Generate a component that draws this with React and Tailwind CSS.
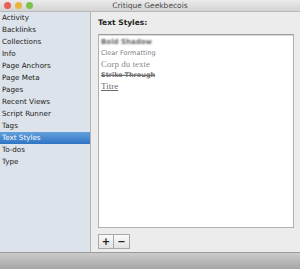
import React from 'react';

const items = [
  'Activity',
  'Backlinks',
  'Collections',
  'Info',
  'Page Anchors',
  'Page Meta',
  'Pages',
  'Recent Views',
  'Script Runner',
  'Tags',
  'Text Styles',
  'To-dos',
  'Type',
];

const App = () => {
  return (
    <div className="w-[300px] h-[269px] flex flex-col overflow-hidden bg-[#ececec] font-['DejaVu_Sans',sans-serif]">
      {/* title bar */}
      <div className="relative h-[12px] shrink-0 flex items-center justify-center bg-gradient-to-b from-[#ebebeb] to-[#d3d3d3] border-b border-[#b8b8b8]">
        <div className="absolute left-[4px] top-[2px] flex gap-[4px]">
          <div className="w-[7px] h-[7px] rounded-full bg-[#e8605a]"></div>
          <div className="w-[7px] h-[7px] rounded-full bg-[#e8b43c]"></div>
          <div className="w-[7px] h-[7px] rounded-full bg-[#7cc24a]"></div>
        </div>
        <span className="text-[7.5px] leading-none text-[#4a4a4a]">Critique Geekbecois</span>
      </div>

      <div className="flex flex-1 min-h-0">
        {/* sidebar */}
        <div className="w-[91px] shrink-0 bg-[#dde3ea] border-r border-[#b4b4b4] flex flex-col">
          {items.map((item) => (
            <div
              key={item}
              className={
                item === 'Text Styles'
                  ? 'h-[12px] flex items-center pl-[2px] text-[7.2px] text-white bg-gradient-to-b from-[#63a0dc] to-[#2f74c4]'
                  : 'h-[12px] flex items-center pl-[2px] text-[7.2px] text-[#1a1a1a]'
              }
            >
              {item}
            </div>
          ))}
        </div>

        {/* main */}
        <div className="flex-1 flex flex-col pl-[7px] pr-[6px]">
          <div className="h-[22px] flex items-center text-[7.5px] font-bold text-[#222]">Text Styles:</div>
          <div className="h-[194px] bg-white border border-[#b0b0b0] border-t-[#9a9a9a] shadow-[inset_0_1px_1px_rgba(0,0,0,0.15)] flex flex-col pt-[2px] pl-[2px]">
            <div className="h-[11px] flex items-center text-[7px] font-bold text-transparent [text-shadow:0_0_2px_rgba(70,70,70,0.85)]">Bold Shadow</div>
            <div className="h-[11px] flex items-center text-[6.5px] text-[#808080]">Clear Formatting</div>
            <div className="h-[11px] flex items-center text-[9px] text-[#8a8a8a] font-['Liberation_Serif',serif]">Corp du texte</div>
            <div className="h-[11px] flex items-center text-[6.5px] font-semibold text-[#707070] line-through">Strike-Through</div>
            <div className="h-[11px] flex items-center text-[9px] text-[#6a6a6a] underline font-['Liberation_Serif',serif]">Titre</div>
          </div>
          <div className="mt-[6px] flex">
            <div className="w-[16px] h-[15px] border border-[#a8a8a8] bg-gradient-to-b from-[#fafafa] to-[#e2e2e2] flex items-center justify-center text-[10px] font-bold leading-none text-[#222]">+</div>
            <div className="w-[16px] h-[15px] border border-l-0 border-[#a8a8a8] bg-gradient-to-b from-[#fafafa] to-[#e2e2e2] flex items-center justify-center text-[10px] font-bold leading-none text-[#222]">−</div>
          </div>
        </div>
      </div>

      {/* bottom bar */}
      <div className="h-[17px] shrink-0 bg-gradient-to-b from-[#cbcbcb] to-[#a6a6a6] border-t border-[#9a9a9a]"></div>
    </div>
  );
};

export default App;
